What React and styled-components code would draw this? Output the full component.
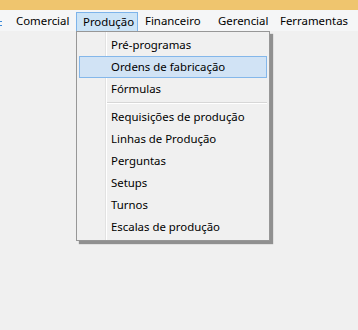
import React from "react";
import styled, { createGlobalStyle } from "styled-components";

const GlobalStyle = createGlobalStyle`
  html, body {
    margin: 0;
    padding: 0;
    background: #f0f0f0;
  }
  body {
    font-family: "Noto Sans", "Open Sans", "DejaVu Sans", sans-serif;
    font-size: 11.4px;
    color: #000;
  }
`;

const topItems = [
  { label: "Comercial", width: 67 },
  { label: "Produção", width: 62, open: true },
  { label: "Financeiro", width: 73 },
  { label: "Gerencial", width: 62 },
  { label: "Ferramentas", width: 79 },
];

const groups = [
  ["Pré-programas", "Ordens de fabricação", "Fórmulas"],
  [
    "Requisições de produção",
    "Linhas de Produção",
    "Perguntas",
    "Setups",
    "Turnos",
    "Escalas de produção",
  ],
];

const App = () => {
  return (
    <>
      <GlobalStyle />
      <Window>
        <TitleStrip />
        <MenuBar>
          <Cutoff>
            <Dot />
          </Cutoff>
          {topItems.map((item) => (
            <TopItem key={item.label} width={item.width} open={item.open}>
              {item.label}
            </TopItem>
          ))}
        </MenuBar>
        <Dropdown>
          {groups.map((group, gi) => (
            <React.Fragment key={gi}>
              {gi > 0 && <Separator />}
              {group.map((label) => (
                <MenuItem key={label} hot={label === "Ordens de fabricação"}>
                  {label}
                </MenuItem>
              ))}
            </React.Fragment>
          ))}
        </Dropdown>
      </Window>
    </>
  );
};

export default App;

const Window = styled.div`
  position: relative;
  width: 358px;
  height: 330px;
  background: #f0f0f0;
  overflow: hidden;
`;

const TitleStrip = styled.div`
  height: 10px;
  background: #efc56e;
`;

const MenuBar = styled.div`
  display: flex;
  height: 21px;
  background: #f5f6f7;
  padding-top: 2px;
  box-sizing: border-box;
`;

const Cutoff = styled.div`
  width: 9px;
  display: flex;
  flex-direction: column;
  justify-content: center;
  height: 19px;
`;

const Dot = styled.div`
  width: 2px;
  height: 5px;
  margin-top: 3px;
  border-top: 1px solid #3b8ad8;
  border-bottom: 1px solid #3b8ad8;
  box-sizing: border-box;
`;

const TopItem = styled.div`
  width: ${(p) => p.width}px;
  box-sizing: border-box;
  padding-left: ${(p) => (p.open ? 6 : 7)}px;
  line-height: 17px;
  white-space: nowrap;
  background: ${(p) => (p.open ? "#cce4f7" : "transparent")};
  border: ${(p) => (p.open ? "1px solid #7eb4ea" : "none")};
  border-bottom: none;
  height: 19px;
`;

const Dropdown = styled.div`
  position: absolute;
  left: 76px;
  top: 31px;
  width: 194px;
  height: 210px;
  box-sizing: border-box;
  padding: 2px 2px 0 2px;
  background: #f0f0f0;
  border: 1px solid #979797;
  box-shadow: 3px 3px 1px rgba(0, 0, 0, 0.4);
  background-image: linear-gradient(
    to right,
    transparent 28px,
    #e2e2e2 28px,
    #e2e2e2 29px,
    #ffffff 29px,
    #ffffff 30px,
    transparent 30px
  );
`;

const MenuItem = styled.div`
  position: relative;
  height: 22px;
  box-sizing: border-box;
  padding-left: 31px;
  line-height: 20px;
  white-space: nowrap;
  border: 1px solid ${(p) => (p.hot ? "#84b7ea" : "transparent")};
  background: ${(p) => (p.hot ? "#d1e3f5" : "transparent")};
`;

const Separator = styled.div`
  height: 6px;
  margin-left: 28px;
  background: linear-gradient(
    to bottom,
    transparent 2px,
    #d7d7d7 2px,
    #d7d7d7 3px,
    #ffffff 3px,
    #ffffff 4px,
    transparent 4px
  );
`;
